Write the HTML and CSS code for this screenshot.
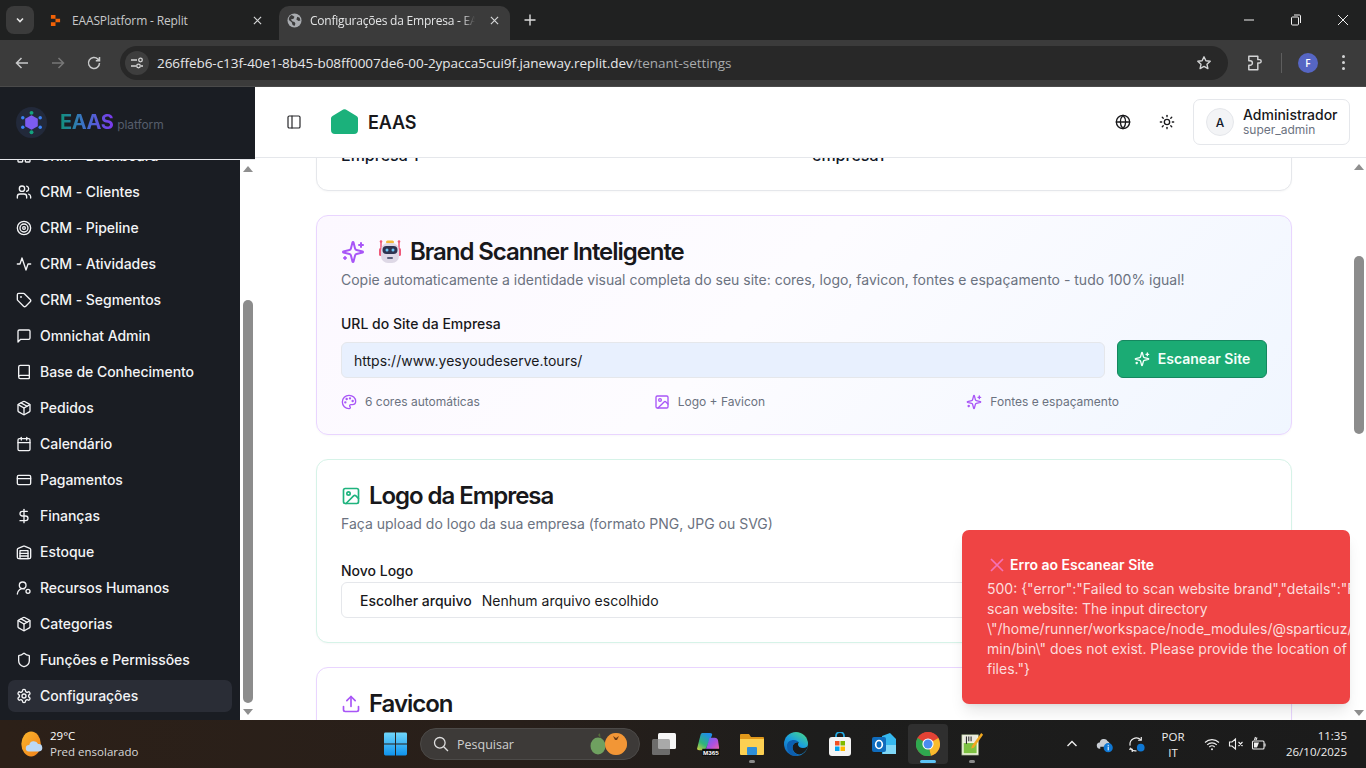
FILE: index.html
```html
<!DOCTYPE html>
<html lang="pt-BR">
<head>
<meta charset="utf-8">
<title>Configurações da Empresa - EAAS</title>
<link rel="stylesheet" href="styles.css">
</head>
<body>
<svg class="sprite" xmlns="http://www.w3.org/2000/svg">
  <symbol id="i-dash" viewBox="0 0 24 24"><rect x="3" y="3" width="7" height="9" rx="1"/><rect x="14" y="3" width="7" height="5" rx="1"/><rect x="14" y="12" width="7" height="9" rx="1"/><rect x="3" y="16" width="7" height="5" rx="1"/></symbol>
  <symbol id="i-users" viewBox="0 0 24 24"><path d="M16 21v-2a4 4 0 0 0-4-4H6a4 4 0 0 0-4 4v2"/><circle cx="9" cy="7" r="4"/><path d="M22 21v-2a4 4 0 0 0-3-3.87"/><path d="M16 3.13a4 4 0 0 1 0 7.75"/></symbol>
  <symbol id="i-target" viewBox="0 0 24 24"><circle cx="12" cy="12" r="10"/><circle cx="12" cy="12" r="6"/><circle cx="12" cy="12" r="2"/></symbol>
  <symbol id="i-activity" viewBox="0 0 24 24"><path d="M22 12h-4l-3 9L9 3l-3 9H2"/></symbol>
  <symbol id="i-tag" viewBox="0 0 24 24"><path d="M12.586 2.586A2 2 0 0 0 11.172 2H4a2 2 0 0 0-2 2v7.172a2 2 0 0 0 .586 1.414l8.704 8.704a2.426 2.426 0 0 0 3.42 0l6.58-6.58a2.426 2.426 0 0 0 0-3.42z"/><circle cx="7.5" cy="7.5" r=".5"/></symbol>
  <symbol id="i-msg" viewBox="0 0 24 24"><path d="M21 15a2 2 0 0 1-2 2H7l-4 4V5a2 2 0 0 1 2-2h14a2 2 0 0 1 2 2z"/></symbol>
  <symbol id="i-book" viewBox="0 0 24 24"><path d="M4 19.5v-15A2.5 2.5 0 0 1 6.5 2H19a1 1 0 0 1 1 1v18a1 1 0 0 1-1 1H6.5a1 1 0 0 1 0-5H20"/></symbol>
  <symbol id="i-package" viewBox="0 0 24 24"><path d="m7.5 4.27 9 5.15"/><path d="M21 8a2 2 0 0 0-1-1.73l-7-4a2 2 0 0 0-2 0l-7 4A2 2 0 0 0 3 8v8a2 2 0 0 0 1 1.73l7 4a2 2 0 0 0 2 0l7-4A2 2 0 0 0 21 16Z"/><path d="m3.3 7 8.7 5 8.7-5"/><path d="M12 22V12"/></symbol>
  <symbol id="i-cal" viewBox="0 0 24 24"><path d="M8 2v4"/><path d="M16 2v4"/><rect x="3" y="4" width="18" height="18" rx="2"/><path d="M3 10h18"/></symbol>
  <symbol id="i-card" viewBox="0 0 24 24"><rect x="2" y="5" width="20" height="14" rx="2"/><path d="M2 10h20"/></symbol>
  <symbol id="i-dollar" viewBox="0 0 24 24"><path d="M12 2v20"/><path d="M17 5H9.5a3.5 3.5 0 0 0 0 7h5a3.5 3.5 0 0 1 0 7H6"/></symbol>
  <symbol id="i-ware" viewBox="0 0 24 24"><path d="M22 8.35V20a2 2 0 0 1-2 2H4a2 2 0 0 1-2-2V8.35A2 2 0 0 1 3.26 6.5l8-3.2a2 2 0 0 1 1.48 0l8 3.2A2 2 0 0 1 22 8.35Z"/><path d="M6 18h12"/><path d="M6 14h12"/><rect x="6" y="10" width="12" height="12"/></symbol>
  <symbol id="i-hr" viewBox="0 0 24 24"><path d="M2 21a8 8 0 0 1 10.4-7.6"/><circle cx="10" cy="8" r="5"/><circle cx="18" cy="17" r="3"/></symbol>
  <symbol id="i-shield" viewBox="0 0 24 24"><path d="M20 13c0 5-3.5 7.5-7.66 8.95a1 1 0 0 1-.67-.01C7.5 20.5 4 18 4 13V6a1 1 0 0 1 1-1c2 0 4.5-1.2 6.24-2.72a1.17 1.17 0 0 1 1.52 0C14.51 3.81 17 5 19 5a1 1 0 0 1 1 1z"/></symbol>
  <symbol id="i-gear" viewBox="0 0 24 24"><path d="M12.22 2h-.44a2 2 0 0 0-2 2v.18a2 2 0 0 1-1 1.73l-.43.25a2 2 0 0 1-2 0l-.15-.08a2 2 0 0 0-2.73.73l-.22.38a2 2 0 0 0 .73 2.73l.15.1a2 2 0 0 1 1 1.72v.51a2 2 0 0 1-1 1.74l-.15.09a2 2 0 0 0-.73 2.73l.22.38a2 2 0 0 0 2.73.73l.15-.08a2 2 0 0 1 2 0l.43.25a2 2 0 0 1 1 1.73V20a2 2 0 0 0 2 2h.44a2 2 0 0 0 2-2v-.18a2 2 0 0 1 1-1.73l.43-.25a2 2 0 0 1 2 0l.15.08a2 2 0 0 0 2.73-.73l.22-.39a2 2 0 0 0-.73-2.73l-.15-.08a2 2 0 0 1-1-1.74v-.5a2 2 0 0 1 1-1.74l.15-.09a2 2 0 0 0 .73-2.73l-.22-.38a2 2 0 0 0-2.73-.73l-.15.08a2 2 0 0 1-2 0l-.43-.25a2 2 0 0 1-1-1.73V4a2 2 0 0 0-2-2z"/><circle cx="12" cy="12" r="3"/></symbol>
  <symbol id="i-panel" viewBox="0 0 24 24"><rect x="3" y="3" width="18" height="18" rx="2"/><path d="M9 3v18"/></symbol>
  <symbol id="i-globe" viewBox="0 0 24 24"><circle cx="12" cy="12" r="10"/><path d="M12 2a14.5 14.5 0 0 0 0 20 14.5 14.5 0 0 0 0-20"/><path d="M2 12h20"/></symbol>
  <symbol id="i-sun" viewBox="0 0 24 24"><circle cx="12" cy="12" r="4"/><path d="M12 2v2"/><path d="M12 20v2"/><path d="m4.93 4.93 1.41 1.41"/><path d="m17.66 17.66 1.41 1.41"/><path d="M2 12h2"/><path d="M20 12h2"/><path d="m6.34 17.66-1.41 1.41"/><path d="m19.07 4.93-1.41 1.41"/></symbol>
  <symbol id="i-spark" viewBox="0 0 24 24"><path d="M9.937 15.5A2 2 0 0 0 8.5 14.063l-6.135-1.582a.5.5 0 0 1 0-.962L8.5 9.936A2 2 0 0 0 9.937 8.5l1.582-6.135a.5.5 0 0 1 .963 0L14.063 8.5A2 2 0 0 0 15.5 9.937l6.135 1.581a.5.5 0 0 1 0 .964L15.5 14.063a2 2 0 0 0-1.437 1.437l-1.582 6.135a.5.5 0 0 1-.963 0z"/><path d="M20 3v4"/><path d="M22 5h-4"/><path d="M4 17v2"/><path d="M5 18H3"/></symbol>
  <symbol id="i-palette" viewBox="0 0 24 24"><path d="M12 22a1 1 0 0 1 0-20 10 9 0 0 1 10 9 5 5 0 0 1-5 5h-2.25a1.75 1.75 0 0 0-1.4 2.8l.3.4a1.75 1.75 0 0 1-1.4 2.8z"/><circle cx="13.5" cy="6.5" r=".8"/><circle cx="17.5" cy="10.5" r=".8"/><circle cx="6.5" cy="12.5" r=".8"/><circle cx="8.5" cy="7.5" r=".8"/></symbol>
  <symbol id="i-image" viewBox="0 0 24 24"><rect x="3" y="3" width="18" height="18" rx="2"/><circle cx="9" cy="9" r="2"/><path d="m21 15-3.086-3.086a2 2 0 0 0-2.828 0L6 21"/></symbol>
  <symbol id="i-upload" viewBox="0 0 24 24"><path d="M21 15v4a2 2 0 0 1-2 2H5a2 2 0 0 1-2-2v-4"/><path d="m17 8-5-5-5 5"/><path d="M12 3v12"/></symbol>
</svg>

<header class="chrome">
  <div class="tabstrip">
    <button class="tab-switch"><svg class="ic-chev" viewBox="0 0 12 12"><path d="M3 4.5 6 7.5 9 4.5"/></svg></button>
    <div class="tab">
      <svg class="tab-fav" viewBox="0 0 12 14"><path d="M1 1h5v4H1zM6 5h5v4H6zM1 9h5v4H1z"/></svg>
      <span class="tab-title">EAASPlatform - Replit</span>
      <svg class="tab-x" viewBox="0 0 10 10"><path d="M1 1l8 8M9 1 1 9"/></svg>
    </div>
    <div class="tab tab-active">
      <svg class="tab-globe" viewBox="0 0 16 16"><circle cx="8" cy="8" r="7.500" fill="#a9acb0"/><path d="M5 2.2 8 4l-1 2-3 1 2 2 2 .5 1 2-1 2.4-2-1-1-3-3-2.5C1.500 5 3 3 5 2.200ZM11 4l2.500 1 .8 3-2 .5L10 7Z" fill="#3b3b3b"/></svg>
      <span class="tab-title tab-title-fade">Configurações da Empresa - EAAS</span>
      <svg class="tab-x" viewBox="0 0 10 10"><path d="M1 1l8 8M9 1 1 9"/></svg>
    </div>
    <svg class="tab-plus" viewBox="0 0 12 12"><path d="M6 .5v11M.5 6h11"/></svg>
    <div class="win-controls">
      <svg viewBox="0 0 12 12"><path d="M1 6h10"/></svg>
      <svg viewBox="0 0 12 12"><rect x="1.500" y="3" width="7" height="8" rx="1"/><path d="M4 1h5.500a1 1 0 0 1 1 1v7"/></svg>
      <svg viewBox="0 0 12 12"><path d="M1 1l10 10M11 1 1 11"/></svg>
    </div>
  </div>
  <div class="toolbar">
    <svg class="tb-ic tb-first" viewBox="0 0 16 16"><path d="M14 8H2.500M7.500 3 2.500 8l5 5"/></svg>
    <svg class="tb-ic tb-dim" viewBox="0 0 16 16"><path d="M2 8h11.500M8.500 3l5 5-5 5"/></svg>
    <svg class="tb-ic" viewBox="0 0 16 16"><path d="M13.500 8a5.500 5.500 0 1 1-1.600-3.900L13.500 5.700M13.500 2v3.700H9.800"/></svg>
    <div class="urlbar">
      <span class="site-info"><svg viewBox="0 0 16 16"><path d="M2 5h6M12 11h2M2 11h5"/><circle cx="11.500" cy="5" r="1.800"/><circle cx="9.500" cy="11" r="1.800"/></svg></span>
      <span class="url"><span class="url-host">266ffeb6-c13f-40e1-8b45-b08ff0007de6-00-2ypacca5cui9f.janeway.replit.dev</span>/tenant-settings</span>
      <svg class="url-star" viewBox="0 0 16 16"><path d="m8 1.800 1.900 4 4.300.5-3.200 3 .9 4.300L8 11.400l-3.900 2.200.9-4.300-3.200-3 4.300-.5Z"/></svg>
    </div>
    <svg class="tb-ext" viewBox="0 0 16 16"><path d="M2.500 2h8v3h1.500a1.500 1.500 0 0 1 0 3h-1.500v6h-8v-4h1.200a2 2 0 0 0 0-4H2.500Z"/></svg>
    <span class="tb-sep"></span>
    <span class="tb-avatar">F</span>
    <span class="tb-dots"><i></i><i></i><i></i></span>
  </div>
</header>

<div class="app">
  <aside class="sidebar">
    <div class="side-head">
      <svg class="side-logo" viewBox="0 0 32 32">
        <circle cx="16" cy="16" r="16" fill="#22293a"/>
        <path d="M16 8.500l6.500 3.700v7.600L16 23.500l-6.500-3.700v-7.600Z" fill="#7c5cf0"/>
        <circle cx="16" cy="6" r="2" fill="#14a37f"/><circle cx="16" cy="26" r="2" fill="#14a37f"/>
        <circle cx="7" cy="11" r="1.800" fill="#3b82f6"/><circle cx="25" cy="11" r="1.800" fill="#3b82f6"/>
        <circle cx="7" cy="21" r="1.800" fill="#3b82f6"/><circle cx="25" cy="21" r="1.800" fill="#3b82f6"/>
      </svg>
      <span class="side-brand">EAAS</span>
      <span class="side-sub">platform</span>
    </div>
    <div class="side-body">
      <nav class="side-nav">
        <a class="nav-item"><svg class="ic16"><use href="#i-dash"/></svg>CRM - Dashboard</a>
        <a class="nav-item"><svg class="ic16"><use href="#i-users"/></svg>CRM - Clientes</a>
        <a class="nav-item"><svg class="ic16"><use href="#i-target"/></svg>CRM - Pipeline</a>
        <a class="nav-item"><svg class="ic16"><use href="#i-activity"/></svg>CRM - Atividades</a>
        <a class="nav-item"><svg class="ic16"><use href="#i-tag"/></svg>CRM - Segmentos</a>
        <a class="nav-item"><svg class="ic16"><use href="#i-msg"/></svg>Omnichat Admin</a>
        <a class="nav-item"><svg class="ic16"><use href="#i-book"/></svg>Base de Conhecimento</a>
        <a class="nav-item"><svg class="ic16"><use href="#i-package"/></svg>Pedidos</a>
        <a class="nav-item"><svg class="ic16"><use href="#i-cal"/></svg>Calendário</a>
        <a class="nav-item"><svg class="ic16"><use href="#i-card"/></svg>Pagamentos</a>
        <a class="nav-item"><svg class="ic16"><use href="#i-dollar"/></svg>Finanças</a>
        <a class="nav-item"><svg class="ic16"><use href="#i-ware"/></svg>Estoque</a>
        <a class="nav-item"><svg class="ic16"><use href="#i-hr"/></svg>Recursos Humanos</a>
        <a class="nav-item"><svg class="ic16"><use href="#i-package"/></svg>Categorias</a>
        <a class="nav-item"><svg class="ic16"><use href="#i-shield"/></svg>Funções e Permissões</a>
        <a class="nav-item nav-active"><svg class="ic16"><use href="#i-gear"/></svg>Configurações</a>
      </nav>
      <div class="scrollbar scrollbar-side">
        <span class="sb-up"></span>
        <span class="sb-track sb-track-side"><span class="sb-thumb"></span></span>
        <span class="sb-down"></span>
      </div>
    </div>
  </aside>

  <div class="main">
    <div class="topbar">
      <svg class="ic16 top-panel"><use href="#i-panel"/></svg>
      <svg class="top-logo" viewBox="0 0 27 25"><path d="M12.200.6a2.400 2.400 0 0 1 2.600 0l10.700 6.300a2.800 2.800 0 0 1 1.500 2.400V21a4 4 0 0 1-4 4H4a4 4 0 0 1-4-4V9.300a2.800 2.800 0 0 1 1.500-2.400Z"/></svg>
      <span class="top-name">EAAS</span>
      <svg class="ic16 top-globe"><use href="#i-globe"/></svg>
      <svg class="ic16 top-sun"><use href="#i-sun"/></svg>
      <div class="user-box">
        <span class="user-avatar">A</span>
        <span class="user-text"><span class="user-name">Administrador</span><span class="user-role">super_admin</span></span>
      </div>
    </div>
    <div class="main-body">
      <main class="content">
        <section class="card card-first">
          <div class="first-row"><span>Empresa 1</span><span>empresa1</span></div>
        </section>

        <section class="card card-brand">
          <h2 class="card-title"><svg class="ic24 purple"><use href="#i-spark"/></svg>
            <svg class="robot" viewBox="0 0 26 26">
              <path d="M4 3v8M22 3v8" stroke="#ef5a7a" stroke-width="1.500" fill="none"/>
              <circle cx="4" cy="2.500" r="1.300" fill="#ef5a7a"/><circle cx="22" cy="2.500" r="1.300" fill="#ef5a7a"/>
              <rect x="9" y="1.500" width="8" height="3" rx="1.500" fill="#f6b93b"/>
              <rect x="2" y="9" width="3" height="8" rx="1.500" fill="#ef5a7a"/><rect x="21" y="9" width="3" height="8" rx="1.500" fill="#ef5a7a"/>
              <rect x="4" y="4" width="18" height="20" rx="7" fill="#ded8e6"/>
              <rect x="5.500" y="7" width="15" height="8" rx="4" fill="#2d3350"/>
              <circle cx="10" cy="11" r="1.500" fill="#6ec6f5"/><circle cx="16" cy="11" r="1.500" fill="#6ec6f5"/>
              <rect x="10" y="18" width="6" height="2" rx="1" fill="#5a5f7a"/>
            </svg>
            <span class="title-text">Brand Scanner Inteligente</span></h2>
          <p class="card-desc">Copie automaticamente a identidade visual completa do seu site: cores, logo, favicon, fontes e espaçamento - tudo 100% igual!</p>
          <label class="field-label field-brand">URL do Site da Empresa</label>
          <div class="url-row">
            <div class="input input-filled">https://www.yesyoudeserve.tours/</div>
            <button class="btn-scan"><svg class="ic16"><use href="#i-spark"/></svg>Escanear Site</button>
          </div>
          <div class="features">
            <div class="feature"><svg class="ic16 purple"><use href="#i-palette"/></svg>6 cores automáticas</div>
            <div class="feature"><svg class="ic16 purple"><use href="#i-image"/></svg>Logo + Favicon</div>
            <div class="feature"><svg class="ic16 purple"><use href="#i-spark"/></svg>Fontes e espaçamento</div>
          </div>
        </section>

        <section class="card card-logo">
          <h2 class="card-title title-gap8"><svg class="ic20 green"><use href="#i-image"/></svg><span>Logo da Empresa</span></h2>
          <p class="card-desc">Faça upload do logo da sua empresa (formato PNG, JPG ou SVG)</p>
          <label class="field-label field-logo">Novo Logo</label>
          <div class="input input-file"><span class="file-btn">Escolher arquivo</span><span>Nenhum arquivo escolhido</span></div>
        </section>

        <section class="card card-fav">
          <h2 class="card-title title-gap8"><svg class="ic20 purple"><use href="#i-upload"/></svg><span>Favicon</span></h2>
          <p class="card-desc">Faça upload do favicon da sua empresa</p>
        </section>
      </main>
      <div class="scrollbar scrollbar-main">
        <span class="sb-up"></span>
        <span class="sb-track sb-track-main"><span class="sb-thumb"></span></span>
        <span class="sb-down"></span>
      </div>
    </div>
  </div>
</div>

<aside class="toast">
  <div class="toast-title"><svg class="toast-x" viewBox="0 0 14 14"><path d="M1 1l12 12M13 1 1 13"/></svg>Erro ao Escanear Site</div>
  <div class="toast-body">500: {"error":"Failed to scan website brand","details":"Failed to<br>scan website: The input directory<br>\"/home/runner/workspace/node_modules/@sparticuz/chromium-<br>min/bin\" does not exist. Please provide the location of<br>files."}</div>
</aside>

<footer class="taskbar">
  <div class="tk-left">
    <svg class="tk-weather" viewBox="0 0 24 28">
      <defs><linearGradient id="sunG" x1="0" y1="0" x2="1" y2="1"><stop offset="0" stop-color="#fbb62c"/><stop offset="1" stop-color="#f0801a"/></linearGradient></defs>
      <ellipse cx="10.500" cy="14" rx="10.500" ry="13.500" fill="url(#sunG)"/>
      <path d="M8 22a3.500 3.500 0 0 1 .5-7 5 5 0 0 1 9.500-1 4 4 0 0 1 1 8Z" fill="#bcd8f4"/>
    </svg>
    <div class="tk-wtext"><span class="tk-temp">29°C</span><span>Pred ensolarado</span></div>
  </div>
  <svg class="tk-win" viewBox="0 0 24 24">
    <defs><linearGradient id="winG" x1="0" y1="0" x2="0" y2="1"><stop offset="0" stop-color="#6fd6fb"/><stop offset="1" stop-color="#0f93ee"/></linearGradient></defs>
    <path d="M0 1.500A1.500 1.500 0 0 1 1.500 0h10v11.500H0ZM12.500 0h10A1.500 1.500 0 0 1 24 1.500v10H12.500ZM0 12.500h11.500V24h-10A1.500 1.500 0 0 1 0 22.500ZM12.500 12.500H24v10a1.500 1.500 0 0 1-1.500 1.500h-10Z" fill="url(#winG)"/>
  </svg>
  <div class="tk-search">
    <svg class="tk-lens" viewBox="0 0 16 16"><circle cx="6.800" cy="6.800" r="5.300"/><path d="m10.700 10.700 4.300 4.300"/></svg>
    <span class="tk-placeholder">Pesquisar</span>
    <svg class="tk-fruit" viewBox="0 0 42 24">
      <path d="M9 3c1-1 2-2 2-2l.5 5Z" fill="#556b3a"/>
      <ellipse cx="9" cy="14" rx="7.500" ry="8.500" fill="#6fa060"/>
      <circle cx="27" cy="12" r="11" fill="#f08c2e"/>
      <circle cx="27" cy="12" r="11" fill="#f4a03e" opacity=".5"/>
      <path d="M24 4l3 2 3-2-2 4h-2Z" fill="#6b3a14"/>
    </svg>
  </div>
  <div class="tk-apps">
    <span class="tk-app"><svg viewBox="0 0 24 24"><rect x="6" y="1" width="18" height="16" rx="1.500" fill="#f6f6f6"/><rect x="0" y="7" width="18" height="16" rx="1.500" fill="#8a8a8a" fill-opacity=".72"/></svg></span>
    <span class="tk-app">
      <svg viewBox="0 0 24 25">
        <defs>
          <linearGradient id="m365A" x1="0" y1="1" x2=".6" y2="0"><stop offset="0" stop-color="#d6d23a"/><stop offset=".45" stop-color="#30b47a"/><stop offset="1" stop-color="#1f8ee8"/></linearGradient>
          <linearGradient id="m365B" x1="0" y1="0" x2="1" y2="1"><stop offset="0" stop-color="#5a6cf0"/><stop offset=".55" stop-color="#b050e0"/><stop offset="1" stop-color="#f06a9a"/></linearGradient>
        </defs>
        <path d="M6 1h8c2 0 3 1 2 3l-6 13c-1 2-2 2-4 2H3c-2 0-3-1-2-3L4 4c.5-2 1-3 2-3Z" fill="url(#m365A)"/>
        <path d="M14 6h5c2 0 3 1 3.500 3l1 7c.3 2-.5 3-2.500 3H11c-1 0-1.500-.5-1-1.500l3-9c.2-1.500.5-2.500 1-2.500Z" fill="url(#m365B)"/>
        <rect x="6" y="17.500" width="18" height="7.500" fill="#0d0d0d"/>
        <text x="15" y="24" class="m365">M365</text>
      </svg>
    </span>
    <span class="tk-app tk-open">
      <svg viewBox="0 0 24 24"><path d="M0 3a1 1 0 0 1 1-1h8l2 3h12a1 1 0 0 1 1 1v4H0Z" fill="#e0981a"/><path d="M0 7h24v15a1 1 0 0 1-1 1H1a1 1 0 0 1-1-1Z" fill="#fcd052"/><rect x="7" y="15" width="10" height="8" rx="1" fill="#2f8fd8"/></svg>
    </span>
    <span class="tk-app">
      <svg viewBox="0 0 24 24">
        <defs><linearGradient id="edgeG" x1=".8" y1="0" x2=".2" y2="1"><stop offset="0" stop-color="#45d48e"/><stop offset=".45" stop-color="#1a9ee0"/><stop offset="1" stop-color="#0f62b8"/></linearGradient></defs>
        <circle cx="12" cy="12" r="12" fill="url(#edgeG)"/>
        <path d="M24 12.500c0 2-2 3.500-5 3.500-3 0-5-1.800-5-3.500 0-1 .5-1.700 1-2-3-1-6.500 1.500-6.500 5 0 3.500 3 6.500 7 7 5-1 8.500-5.500 8.500-10Z" fill="#1b1b1b"/>
        <path d="M8.500 15.500C8.500 19 11 22 14 22.700 13 23 12.500 24 12 24 6 24 3 19 3 14c0-4 3-6 7-6 2 0 4 1 5 2.500-3-1-6.500 1.500-6.500 5Z" fill="#0c5fb0"/>
      </svg>
    </span>
    <span class="tk-app">
      <svg viewBox="0 0 24 24"><path d="M8 6V4a4 4 0 0 1 8 0v2" fill="none" stroke="#23a8e0" stroke-width="1.800"/><rect x="1" y="5" width="22" height="19" rx="3" fill="#f4f4f4"/><rect x="7" y="9" width="4.500" height="4.500" fill="#f25022"/><rect x="12.500" y="9" width="4.500" height="4.500" fill="#7fba00"/><rect x="7" y="14.500" width="4.500" height="4.500" fill="#00a4ef"/><rect x="12.500" y="14.500" width="4.500" height="4.500" fill="#ffb900"/></svg>
    </span>
    <span class="tk-app">
      <svg viewBox="0 0 24 24"><path d="M10 4 18 1l6 6v13a2 2 0 0 1-2 2H10Z" fill="#35b8ee"/><path d="M11 13h13v9H11Z" fill="#7fd7f7"/><rect x="0" y="5" width="14" height="15" rx="2" fill="#0f6cbd"/><ellipse cx="7" cy="12.500" rx="3.300" ry="4" fill="none" stroke="#fff" stroke-width="1.700"/></svg>
    </span>
    <span class="tk-app tk-active">
      <svg viewBox="0 0 24 24"><circle cx="12" cy="12" r="12" fill="#e24235"/><path d="M12 12 22.400 6a12 12 0 0 1-7.500 17.700Z" fill="#f9bb2d"/><path d="M12 12 14.900 23.700A12 12 0 0 1 1.600 6Z" fill="#2fa84f"/><path d="M1.600 6A12 12 0 0 1 22.400 6H12Z" fill="#e24235"/><circle cx="12" cy="12" r="5.600" fill="#fff"/><circle cx="12" cy="12" r="4.500" fill="#4a8cf0"/></svg>
    </span>
    <span class="tk-app tk-open">
      <svg viewBox="0 0 24 26"><rect x="1" y="3" width="18" height="22" fill="#f2f6df" stroke="#8a9a78" stroke-width=".7"/><rect x="3" y="12" width="14" height="11" fill="#7dc242"/><path d="M3 4h14v7H3Z" fill="#e9e9e0"/><path d="M6 5v8M8.500 5v5M11 5v5" stroke="#333" stroke-width="1.200"/><path d="M22 1l2 2-10 14-3 1 1-3Z" fill="#f0a820"/></svg>
    </span>
  </div>
  <div class="tk-tray">
    <span class="tray-slot s32"><svg class="tray-ic12" viewBox="0 0 12 12"><path d="M1.500 8 6 3.500 10.500 8"/></svg></span>
    <span class="tray-slot s32"><svg class="tray-cloud" viewBox="0 0 16 16"><path d="M4 12a3 3 0 0 1-.5-6 4 4 0 0 1 7.500-1 3 3 0 0 1 1 5H4Z" fill="#c9ced4"/><circle cx="11.500" cy="11" r="4.300" fill="#0f78d4"/><rect x="11" y="10" width="1" height="3.500" fill="#fff"/><rect x="11" y="8.300" width="1" height="1" fill="#fff"/></svg></span>
    <span class="tray-slot s32"><svg class="tray-sync" viewBox="0 0 16 16"><path class="sync-line" d="M2 9a6 6 0 0 1 10-5.500M8 14a6 6 0 0 1-6-3"/><path class="sync-line" d="M12.500 1v3H9.500M1 12.500h3V15"/><circle cx="12" cy="11" r="3.600" fill="#0f78d4"/></svg></span>
    <span class="tray-lang"><span>POR</span><span>IT</span></span>
    <span class="tray-slot s24"><svg class="tray-ic" viewBox="0 0 16 16"><path d="M1 6.500a10 10 0 0 1 14 0M3.200 8.800a7 7 0 0 1 9.600 0M5.300 11a4 4 0 0 1 5.400 0"/><circle class="tray-fill" cx="8" cy="13.200" r="1"/></svg></span>
    <span class="tray-slot s24"><svg class="tray-ic" viewBox="0 0 16 16"><path d="M1.500 6v4h2.500l3.500 3V3L4 6ZM10.500 6l4 4M14.500 6l-4 4"/></svg></span>
    <span class="tray-slot s22"><svg class="tray-ic" viewBox="0 0 16 16"><rect x="1.500" y="5" width="11.500" height="8" rx="1"/><path d="M14 7.500v3"/><path class="tray-fill" d="M3 6.500h5l-2 5H3Z"/><path d="M4.500 1 3.500 4M6 1.500 5 4"/></svg></span>
    <span class="tray-time"><span>11:35</span><span>26/10/2025</span></span>
  </div>
</footer>
</body>
</html>
```
FILE: styles.css
```css
* { box-sizing: border-box; }
html, body { margin: 0; padding: 0; }
body {
  width: 1366px;
  height: 768px;
  overflow: hidden;
  display: flex;
  flex-direction: column;
  position: relative;
  font-family: Inter, "Liberation Sans", sans-serif;
  color: #111827;
  background: #fff;
}
.sprite { display: none; }
svg { flex: none; display: block; }
h2, p { margin: 0; }
button { font: inherit; border: 0; padding: 0; }

.ic16, .ic20, .ic24 {
  fill: none;
  stroke: currentColor;
  stroke-width: 2;
  stroke-linecap: round;
  stroke-linejoin: round;
}
.ic16 { width: 16px; height: 16px; }
.ic20 { width: 20px; height: 20px; }
.ic24 { width: 24px; height: 24px; }
.purple { color: #a855f7; }
.green { color: #1fb37e; }

/* browser chrome */
.chrome { flex: none; height: 87px; font-family: "Open Sans", "Noto Sans", sans-serif; }
.tabstrip { height: 40px; background: #202121; display: flex; padding-left: 6px; align-items: flex-start; }
.tab-switch { width: 28px; height: 28px; margin-top: 6px; border-radius: 8px; background: #3b3b3b; display: flex; align-items: center; justify-content: center; }
.ic-chev { width: 12px; height: 12px; fill: none; stroke: #e6e6e6; stroke-width: 1.600; }
.tab { height: 34px; margin-top: 6px; padding-bottom: 6px; display: flex; align-items: center; position: relative; }
.tab:not(.tab-active) { width: 245px; padding-left: 16px; }
.tab-active { background: #3b3b3b; border-radius: 10px 10px 0 0; padding-left: 8px; width: 231px; }
.tab-fav { width: 11px; height: 13px; fill: #f26207; margin-right: 11px; }
.tab-globe { width: 15px; height: 15px; margin-right: 8px; }
.tab-title { font-size: 12px; color: #c8c9ca; white-space: nowrap; width: 175px; overflow: hidden; letter-spacing: -.15px; }
.tab-active .tab-title { color: #e4e5e6; width: 165px; letter-spacing: -.22px; }
.tab-x { width: 9px; height: 9px; fill: none; stroke: #d5d6d7; stroke-width: 1.300; margin-left: auto; margin-right: 11px; }
.tab:not(.tab-active) .tab-x { margin-right: 17px; }
.tab-title-fade { -webkit-mask-image: linear-gradient(to right, #000 92%, transparent 100%); mask-image: linear-gradient(to right, #000 92%, transparent 100%); }
.tab-plus { width: 12px; height: 12px; margin: 14px 0 0 14px; fill: none; stroke: #dcdcdc; stroke-width: 1.400; }
.win-controls { margin-left: auto; display: flex; height: 40px; align-items: center; gap: 35px; padding-right: 17px; }
.win-controls svg { width: 12px; height: 12px; fill: none; stroke: #f0f0f0; stroke-width: 1; }

.toolbar { height: 47px; background: #3b3b3b; border-bottom: 1px solid #4a4a4a; display: flex; align-items: center; padding: 0 0 1px 14px; }
.tb-ic { width: 16px; height: 16px; fill: none; stroke: #c8c9ca; stroke-width: 1.500; margin-right: 20px; }
.tb-dim { stroke: #777; }
.tb-ic:nth-of-type(3) { margin-right: 18px; }
.urlbar { width: 1108px; height: 34px; border-radius: 17px; background: #282828; display: flex; align-items: center; padding-left: 5px; }
.site-info { width: 24px; height: 24px; border-radius: 50%; background: #3e3e3e; display: flex; align-items: center; justify-content: center; }
.site-info svg { width: 16px; height: 16px; fill: none; stroke: #d6d6d6; stroke-width: 1.300; }
.url { margin-left: 8px; font-size: 13.5px; color: #a9abad; white-space: nowrap; letter-spacing: -.055px; }
.url-host { color: #e6e7e8; }
.url-star { margin-left: auto; margin-right: 16px; width: 16px; height: 16px; fill: none; stroke: #d3d4d5; stroke-width: 1.400; stroke-linejoin: round; }
.tb-ext { width: 18px; height: 18px; margin-left: 18px; fill: none; stroke: #d3d4d5; stroke-width: 1.300; stroke-linejoin: round; }
.tb-sep { width: 1px; height: 20px; background: #5e5e5e; margin-left: 17px; }
.tb-avatar { width: 20px; height: 20px; border-radius: 50%; background: #5666c4; color: #fff; font-size: 10px; font-weight: 600; display: flex; align-items: center; justify-content: center; margin-left: 16px; }
.tb-dots { margin-left: 24px; display: flex; flex-direction: column; gap: 3px; }
.tb-dots i { width: 3px; height: 3px; border-radius: 50%; background: #d3d4d5; display: block; }

/* app */
.app { flex: 1; min-height: 0; display: flex; }
.sidebar { width: 255px; flex: none; display: flex; flex-direction: column; }
.side-head { height: 73px; flex: none; background: #1a1d23; border-bottom: 1px solid #e5e7eb; display: flex; align-items: center; padding: 0 0 2px 16px; }
.side-logo { width: 31px; height: 31px; }
.side-brand {
  margin-left: 13px;
  font-size: 20px;
  font-weight: 700;
  letter-spacing: -.45px;
  background: linear-gradient(90deg, #10907a, #3d72c8 45%, #7c3aed);
  -webkit-background-clip: text;
  background-clip: text;
  color: transparent;
}
.side-sub { margin: 5px 0 0 4px; font-size: 12px; letter-spacing: -.1px; color: #565d6b; }
.side-body { flex: 1; min-height: 0; display: flex; }
.side-nav { width: 240px; flex: none; background: #1a1d23; padding: 0 8px; overflow: hidden; display: flex; flex-direction: column; gap: 4px; }
.nav-item { flex: none; height: 32px; display: flex; align-items: center; gap: 8px; padding-left: 8px; border-radius: 7px; color: #f3f4f6; font-size: 14px; line-height: 20px; font-weight: 500; letter-spacing: -.04px; white-space: nowrap; }
.nav-item:first-child { margin-top: -20px; }
.nav-active { background: #2a2d36; }

.scrollbar { background: #fff; display: flex; flex-direction: column; align-items: center; flex: none; }
.scrollbar-side { width: 15px; padding: 6px 0 5px; }
.scrollbar-main { width: 14px; padding: 6px 0 4px; }
.sb-up { flex: none; width: 0; height: 0; border-left: 5px solid transparent; border-right: 5px solid transparent; border-bottom: 6px solid #8f8f8f; }
.sb-down { flex: none; width: 0; height: 0; border-left: 5px solid transparent; border-right: 5px solid transparent; border-top: 6px solid #8f8f8f; }
.sb-track { flex: 1; width: 100%; display: flex; flex-direction: column; align-items: center; margin: 1px 0; }
.sb-thumb { width: 10px; background: #8c8c8c; border-radius: 5px; display: block; }
.sb-track-side .sb-thumb { margin-top: 127px; height: 403px; }
.sb-track-main .sb-thumb { margin-top: 85px; height: 178px; }

.main { flex: 1; min-width: 0; display: flex; flex-direction: column; }
.topbar { flex: none; height: 71px; border-bottom: 1px solid #e5e7eb; display: flex; align-items: center; padding: 0 16px 0 31px; background: #fff; }
.top-panel { color: #27272a; stroke-width: 1.800; }
.top-logo { width: 27px; height: 25px; fill: #1bb17b; margin: 0 0 1px 29px; }
.top-name { margin-left: 10px; font-size: 18px; font-weight: 600; letter-spacing: -.1px; color: #18181b; }
.top-globe { margin-left: auto; color: #18181b; }
.top-sun { margin-left: 28px; color: #18181b; }
.user-box { margin-left: 18px; width: 157px; height: 46px; border: 1px solid #e5e7eb; border-radius: 7px; display: flex; align-items: center; padding-left: 12px; gap: 9px; }
.user-avatar { width: 28px; height: 28px; border-radius: 50%; background: #f3f4f6; border: 1px solid #e5e7eb; display: flex; align-items: center; justify-content: center; font-size: 12px; font-weight: 500; color: #111827; }
.user-text { display: flex; flex-direction: column; margin-bottom: 2px; }
.user-name { font-size: 14px; font-weight: 500; line-height: 17px; color: #18181b; }
.user-role { font-size: 12px; line-height: 14px; color: #6b7280; }

.main-body { flex: 1; min-height: 0; display: flex; }
.content { flex: 1; min-width: 0; overflow: hidden; padding: 0 60px 0 61px; display: flex; flex-direction: column; gap: 24px; }
.card { flex: none; border: 1px solid #e5e7eb; border-radius: 12px; padding: 24px; background: #fff; box-shadow: 0 1px 2px rgba(0,0,0,.03); }
.card-first { margin-top: -66px; height: 99px; padding-top: 50px; }
.first-row { display: grid; grid-template-columns: 471px 1fr; font-size: 16px; font-weight: 500; line-height: 24px; }
.card-brand { height: 220px; border-color: #e9d5ff; background: linear-gradient(135deg, #fcf8ff, #fdfcff 45%, #f0f6ff); }
.card-logo { height: 184px; border-color: #d6f3e8; }
.card-fav { border-color: #e9d5ff; }
.card-title { display: flex; align-items: center; font-size: 24px; font-weight: 600; line-height: 24px; letter-spacing: -1.05px; color: #18181b; }
.robot { width: 26px; height: 26px; margin: -1px 7px -1px 12px; }
.title-gap8 { gap: 8px; }
.card-desc { margin-top: 6px; font-size: 14px; line-height: 20px; color: #6b7280; }
.field-label { display: block; font-size: 14px; font-weight: 500; line-height: 20px; color: #18181b; }
.field-brand { margin: 24px 0 6px; }
.field-logo { margin: 27px 0 1px; }
.url-row { display: flex; gap: 12px; align-items: flex-end; }
.input { height: 36px; border-radius: 6px; border: 1px solid #e5e7eb; font-size: 14px; line-height: 20px; display: flex; align-items: center; padding: 1px 12px 0; color: #18181b; }
.input-filled { flex: 1; background: #e8f0fe; }
.btn-scan { width: 150px; height: 38px; border: 1px solid #15875f; border-radius: 6px; background: #1bab74; color: #f4fffa; font-size: 14px; line-height: 20px; font-weight: 600; display: flex; align-items: center; justify-content: center; gap: 8px; }
.features { display: grid; grid-template-columns: repeat(3, 1fr); gap: 12px; margin-top: 16px; }
.feature { display: flex; align-items: center; gap: 8px; font-size: 12px; line-height: 16px; color: #6b7280; }
.input-file { gap: 10px; padding: 1px 0 0 18px; background: #fff; }
.file-btn { font-weight: 500; }

/* toast */
.toast { position: absolute; left: 962px; top: 530px; width: 388px; height: 174px; background: #ef4444; border-radius: 7px; padding: 25px 0 0 25px; overflow: hidden; box-shadow: 0 10px 15px -3px rgba(0,0,0,.1), 0 4px 6px -4px rgba(0,0,0,.1); color: #fff; font-size: 14px; }
.toast-title { display: flex; align-items: center; height: 20px; font-weight: 600; line-height: 20px; gap: 6px; margin-left: 3px; }
.toast-x { width: 14px; height: 14px; fill: none; stroke: #f472b6; stroke-width: 1.700; }
.toast-body { margin-top: 4px; line-height: 20px; white-space: nowrap; color: #fcdcdc; }

/* taskbar */
.taskbar { flex: none; height: 48px; background: linear-gradient(90deg, #2c2018, #281f1a 38%, #1d1d1c 60%, #1b1b1b); display: flex; align-items: center; font-family: "Open Sans", "Noto Sans", sans-serif; color: #eee; position: relative; }
.tk-left { width: 384px; flex: none; display: flex; align-items: center; padding-left: 21px; }
.tk-weather { width: 23px; height: 26px; }
.tk-wtext { margin-left: 6px; display: flex; flex-direction: column; font-size: 11.500px; line-height: 16px; color: #d8d8d8; }
.tk-temp { color: #fff; }
.tk-win { width: 23px; height: 24px; }
.tk-search { margin-left: 13px; width: 220px; height: 32px; border-radius: 16px; background: #3d3a38; border: 1px solid #4c4a48; display: flex; align-items: center; padding-left: 12px; }
.tk-lens { width: 16px; height: 16px; fill: none; stroke: #ddd; stroke-width: 1.300; }
.tk-placeholder { margin-left: 8px; font-size: 12.500px; color: #cfcfcf; }
.tk-fruit { margin-left: auto; margin-right: 8px; width: 42px; height: 24px; }
.tk-apps { margin-left: 4px; display: flex; gap: 4px; height: 40px; }
.tk-app { width: 40px; height: 40px; display: flex; align-items: center; justify-content: center; position: relative; border-radius: 4px; }
.tk-app svg { width: 24px; height: 24px; }
.m365 { font: 700 6.500px "Liberation Sans", sans-serif; fill: #fff; text-anchor: middle; }
.tk-open::after, .tk-active::after { content: ""; position: absolute; left: 50%; bottom: 1px; width: 6px; height: 3px; margin-left: -3px; border-radius: 2px; background: #8a8a8a; }
.tk-active { background: #2f2f2f; }
.tk-active::after { width: 16px; margin-left: -8px; background: #5cc3f5; }
.tk-tray { position: absolute; left: 1056px; top: 0; height: 48px; width: 291px; display: flex; align-items: center; }
.tray-slot { flex: none; display: flex; align-items: center; justify-content: center; }
.s32 { width: 32px; }
.s24 { width: 24px; }
.s22 { width: 22px; }
.tray-ic12 { width: 12px; height: 12px; fill: none; stroke: #eee; stroke-width: 1.400; }
.tray-cloud { width: 17px; height: 17px; }
.tray-sync { width: 17px; height: 17px; }
.sync-line { fill: none; stroke: #eee; stroke-width: 1.100; }
.tray-ic { width: 16px; height: 16px; fill: none; stroke: #eee; stroke-width: 1.100; }
.tray-fill { fill: #eee; stroke: none; }
.tray-lang { width: 42px; margin: 1px 6px 0 0; flex: none; display: flex; flex-direction: column; align-items: center; font-size: 11.500px; line-height: 16px; color: #eee; }
.tray-time { margin-left: auto; display: flex; flex-direction: column; align-items: flex-end; font-size: 11.500px; line-height: 16px; color: #eee; }
```
